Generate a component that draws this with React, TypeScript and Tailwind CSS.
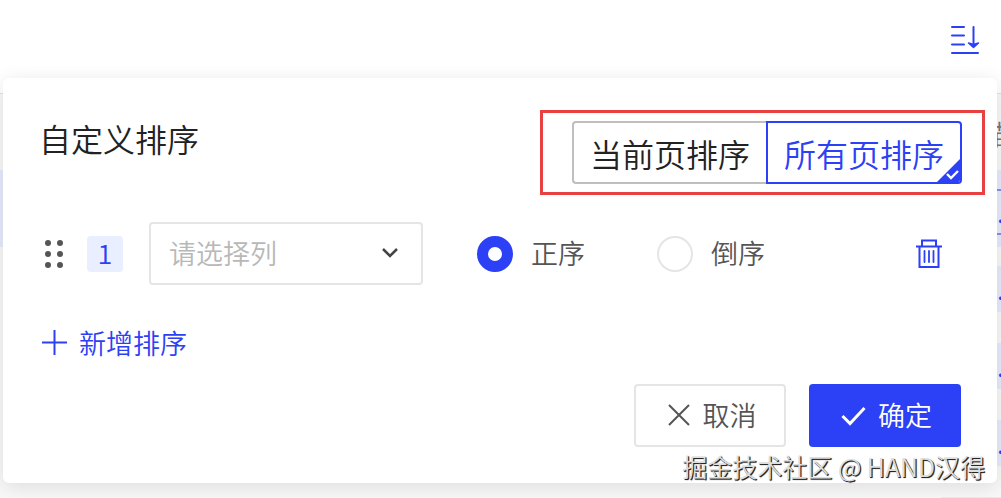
import { useState } from 'react';

type Scope = 'page' | 'all';
type Order = 'asc' | 'desc';

const scopes: { value: Scope; label: string }[] = [
  { value: 'page', label: '当前页排序' },
  { value: 'all', label: '所有页排序' },
];

const orders: { value: Order; label: string }[] = [
  { value: 'asc', label: '正序' },
  { value: 'desc', label: '倒序' },
];

function SortIcon() {
  return (
    <svg width="30" height="30" viewBox="0 0 30 30" fill="none" stroke="currentColor" strokeWidth="2" strokeLinecap="round">
      <path d="M2 3h12M2 11.5h12M2 20.5h12M2 29h26" />
      <path d="M23.5 3v19" />
      <path d="M18.5 19l5 4.5 5-4.5-5 1.5z" fill="currentColor" strokeWidth="1.5" strokeLinejoin="round" />
    </svg>
  );
}

function DragIcon() {
  return (
    <svg width="20" height="30" viewBox="0 0 20 30" fill="currentColor">
      {[4, 15, 26].map((y) => (
        <g key={y}>
          <circle cx="4" cy={y} r="3" />
          <circle cx="16" cy={y} r="3" />
        </g>
      ))}
    </svg>
  );
}

function TrashIcon() {
  return (
    <svg width="28" height="30" viewBox="0 0 28 30" fill="none" stroke="currentColor" strokeWidth="2">
      <path d="M7 7V1.5h14V7M1 7.5h26M4.5 7.5v20.5h19V7.5" />
      <path d="M9.5 12v11M14 12v11M18.5 12v11" strokeWidth="1.8" strokeLinecap="round" />
    </svg>
  );
}

// Table that stays visible around the edges of the popup
function TableBackdrop() {
  return (
    <div>
      <div className="flex h-[77px] items-center justify-end border-t border-[#e2e2e2] bg-[#f8f8f8] pt-1 text-[27px] text-[#777]">
        <span className="w-4 overflow-hidden whitespace-nowrap">描述</span>
      </div>
      {[0, 1, 2, 3, 4].map((row) => (
        <div
          key={row}
          className={`flex h-[77px] items-start justify-end pt-[19px] ${row === 0 ? 'bg-[#e6eafc]' : 'bg-[#f8f8f9]'}`}
        >
          <div
            className={`flex h-[46px] w-[60px] items-center justify-end border-y-2 bg-[#e6ebfb] text-[27px] text-[#2c41f5] ${
              row === 0 ? 'border-[#8391ea]' : 'border-transparent'
            }`}
          >
            <span className="w-1 overflow-hidden">.</span>
          </div>
        </div>
      ))}
    </div>
  );
}

export default function App() {
  const [scope, setScope] = useState<Scope>('all');
  const [order, setOrder] = useState<Order>('asc');
  const [column, setColumn] = useState('');

  return (
    <div className="relative h-screen overflow-hidden bg-white font-['Noto_Sans_CJK_SC',sans-serif] font-[350]">
      <div className="flex h-[93px] items-start justify-end pr-[21px] pt-6">
        <button aria-label="排序" className="text-[#2c41f5]">
          <SortIcon />
        </button>
      </div>
      <TableBackdrop />

      <div className="absolute left-[3px] right-1 top-[78px] rounded-md bg-white pb-9 pt-8 shadow-[0_4px_20px_rgba(0,0,0,0.11)]">
        <div className="flex items-start justify-between pl-9 pr-3">
          <h2 className="pt-1.5 text-[32px] leading-[44px] text-[#222]">自定义排序</h2>
          <div className="flex border-[3px] border-[#e84142] py-2 pl-[29px] pr-5">
            {scopes.map(({ value, label }) => (
              <button
                key={value}
                aria-pressed={scope === value}
                onClick={() => setScope(value)}
                className={`relative h-[63px] overflow-hidden border-2 px-4 text-[32px] leading-[56px] first:rounded-l first:border-r-0 last:rounded-r ${
                  scope === value ? 'border-[#2c41f5] text-[#2c41f5]' : 'border-[#bfbfbf] text-[#222]'
                }`}
              >
                {label}
                {scope === value && (
                  <svg className="absolute bottom-0 right-0" width="23" height="23" viewBox="0 0 23 23" fill="none">
                    <path d="M23 0v23H0z" fill="#2c41f5" />
                    <path d="M10 15l4 4 7-7" stroke="#fff" strokeWidth="2.4" />
                  </svg>
                )}
              </button>
            ))}
          </div>
        </div>

        <div className="mt-[27px] flex items-center pl-[41px] pr-[54px] text-[27px] text-[#555]">
          <span className="cursor-move">
            <DragIcon />
          </span>
          <span className="ml-[23px] flex h-9 w-9 items-center justify-center rounded bg-[#e9effe] text-[#2c41f5]">1</span>
          <div className="relative ml-[26px]">
            <select
              aria-label="请选择列"
              value={column}
              onChange={(e) => setColumn(e.target.value)}
              className="block h-[63px] w-[274px] appearance-none rounded border-2 border-[#e5e5e5] bg-white px-[18px] text-[#b8b8b8]"
            >
              <option value="">请选择列</option>
            </select>
            <svg className="pointer-events-none absolute right-6 top-6" width="18" height="14" viewBox="0 0 18 14" fill="none">
              <path d="M2 3l7 7 7-7" stroke="#444" strokeWidth="2.5" />
            </svg>
          </div>
          <div className="ml-[54px] flex gap-[72px]">
            {orders.map(({ value, label }) => (
              <label key={value} className="flex items-center gap-[18px]">
                <input
                  type="radio"
                  name="order"
                  checked={order === value}
                  onChange={() => setOrder(value)}
                  className="h-9 w-9 appearance-none rounded-full border-2 border-[#e5e5e5] bg-white checked:border-[11px] checked:border-[#2c41f5]"
                />
                {label}
              </label>
            ))}
          </div>
          <button aria-label="删除" className="ml-auto text-[#2c41f5]">
            <TrashIcon />
          </button>
        </div>

        <button className="ml-[38px] mt-10 flex h-9 items-center gap-[11px] text-[27px] text-[#2c41f5]">
          <svg width="27" height="27" viewBox="0 0 27 27" stroke="currentColor" strokeWidth="2">
            <path d="M1 12.5h25M13.5 0v25" />
          </svg>
          新增排序
        </button>

        <div className="mt-[23px] flex justify-end gap-[23px] pr-9 text-[27px]">
          <button className="flex h-[63px] w-[152px] items-center justify-center gap-3 rounded border-2 border-[#e5e5e5] pl-[3px] text-[#555]">
            <svg width="24" height="24" viewBox="0 0 24 24" stroke="currentColor" strokeWidth="2">
              <path d="M2 1l20 20M22 1L2 21" />
            </svg>
            取消
          </button>
          <button className="flex h-[63px] w-[152px] items-center justify-center gap-3 rounded bg-[#2c41f5] pl-[3px] text-white">
            <svg width="25" height="20" viewBox="0 0 25 20" fill="none" stroke="currentColor" strokeWidth="3">
              <path d="M1.5 10l7.5 7.5L23.5 2" />
            </svg>
            确定
          </button>
        </div>

        <span className="absolute bottom-0 right-3 text-[25px] leading-[34px] text-[#dedede] [text-shadow:1px_1px_1px_#222,1px_1px_0_#444]">
          掘金技术社区 @ HAND汉得
        </span>
      </div>
    </div>
  );
}
